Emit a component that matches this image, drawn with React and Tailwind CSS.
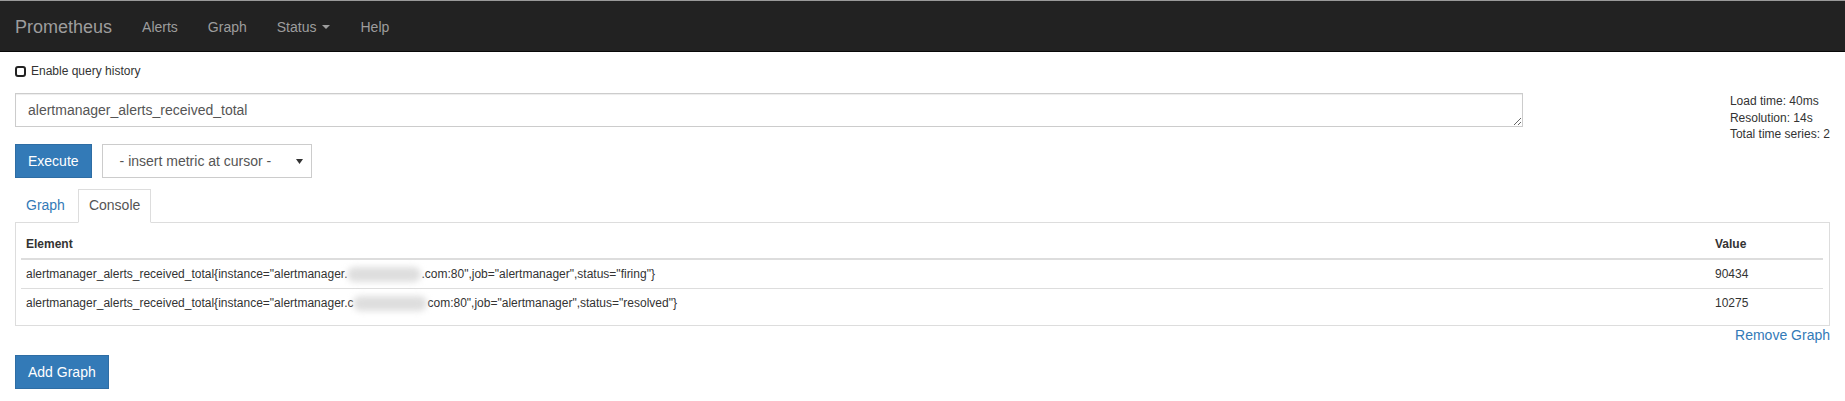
import React from 'react';

const navLinks = ['Alerts', 'Graph', 'Status', 'Help'];

const rows = [
  { pre: 'alertmanager.', post: '.com:80",job="alertmanager",status="firing"}', value: '90434' },
  { pre: 'alertmanager.c', post: 'com:80",job="alertmanager",status="resolved"}', value: '10275' },
];

const Navbar = () => (
  <nav className="h-[52px] pt-[2px] bg-[#222] border-t border-t-[#9a9a9a] border-b border-b-[#080808] flex items-center">
    <a className="px-[15px] text-[18px] leading-[20px] text-[#9d9d9d]">Prometheus</a>
    <ul className="flex">
      {navLinks.map((name) => (
        <li key={name}>
          <a className="flex items-center px-[15px] text-[14px] leading-[20px] text-[#9d9d9d]">
            {name}
            {name === 'Status' && (
              <span className="ml-[6px] w-0 h-0 border-l-[4px] border-r-[4px] border-t-[4px] border-l-transparent border-r-transparent border-t-[#9d9d9d]" />
            )}
          </a>
        </li>
      ))}
    </ul>
  </nav>
);

const Blur = ({ w }) => (
  <span className={`inline-block align-middle h-[15px] ${w} rounded-full bg-[#dedede] blur-[3px]`} />
);

export default function App() {
  return (
    <div className="min-h-screen bg-white text-[#333] font-['Liberation_Sans',Arial,sans-serif]">
      <Navbar />

      <div className="px-[15px]">
        <label className="mt-[11px] h-[17px] flex items-center gap-[5px] text-[12px] leading-[17px]">
          <span className="w-[11px] h-[11px] border-2 border-[#222] rounded-[3px]" />
          Enable query history
        </label>

        <div className="flex -mx-[15px] mt-[13px]">
          <div className="w-10/12 px-[15px]">
            <textarea
              readOnly
              defaultValue="alertmanager_alerts_received_total"
              className="block w-full h-[34px] px-[12px] py-[6px] text-[14px] leading-[20px] text-[#555] border border-[#ccc] shadow-[inset_0_1px_1px_rgba(0,0,0,0.075)] resize-y overflow-hidden outline-none font-['Liberation_Sans',Arial,sans-serif]"
            />
            <div className="mt-[17px] flex gap-[10px]">
              <button className="px-[12px] py-[6px] text-[14px] leading-[20px] text-white bg-[#337ab7] border border-[#2e6da4]">
                Execute
              </button>
              <div className="w-[210px] h-[34px] flex items-center justify-between pl-[17px] pr-[8px] border border-[#ccc] text-[14px] text-[#555]">
                <span>- insert metric at cursor -</span>
                <svg width="7" height="5" viewBox="0 0 7 5">
                  <path d="M0 0 L7 0 L3.5 5 Z" fill="#333" />
                </svg>
              </div>
            </div>
          </div>
          <div className="w-2/12 px-[15px] flex justify-end">
            <div className="text-[12px] leading-[16.7px]">
              <div>Load time: 40ms</div>
              <div>Resolution: 14s</div>
              <div>Total time series: 2</div>
            </div>
          </div>
        </div>

        <div className="mt-[11px] flex">
          <a className="mr-[2px] px-[10px] pt-[5px] pb-[6px] border border-transparent text-[14px] leading-[20px] text-[#337ab7]">
            Graph
          </a>
          <a className="relative z-10 -mb-px px-[10px] pt-[5px] pb-[6px] border border-[#ddd] border-b-white bg-white text-[14px] leading-[20px] text-[#555]">
            Console
          </a>
        </div>

        <div className="border border-[#ddd] pt-[7px] pl-[5px] pr-[6px] pb-[8px]">
          <table className="w-full border-collapse text-[12px] leading-[18px]">
            <thead>
              <tr>
                <th className="text-left font-bold p-[5px] border-b-2 border-[#ddd]">Element</th>
                <th className="text-left font-bold p-[5px] border-b-2 border-[#ddd] w-[113px]">Value</th>
              </tr>
            </thead>
            <tbody>
              {rows.map((r) => (
                <tr key={r.value}>
                  <td className="p-[5px] border-t border-[#ddd] whitespace-nowrap">
                    alertmanager_alerts_received_total{'{'}instance="{r.pre}
                    <Blur w="w-[74px]" />
                    {r.post}
                  </td>
                  <td className="p-[5px] border-t border-[#ddd]">{r.value}</td>
                </tr>
              ))}
            </tbody>
          </table>
        </div>

        <div className="flex justify-end">
          <a className="text-[14px] leading-[18px] text-[#337ab7]">Remove Graph</a>
        </div>

        <button className="mt-[11px] px-[12px] py-[6px] text-[14px] leading-[20px] text-white bg-[#337ab7] border border-[#2e6da4]">
          Add Graph
        </button>
      </div>
    </div>
  );
}
